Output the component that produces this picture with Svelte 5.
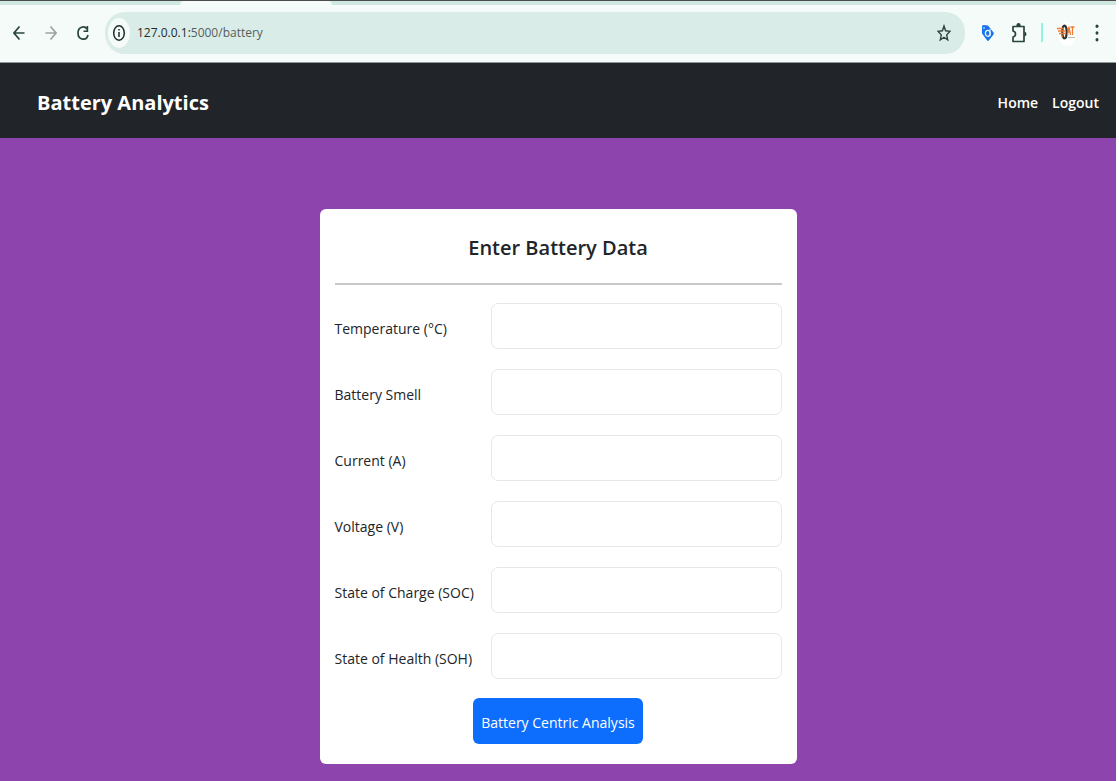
<script>
  const fields = [
    { id: 'temperature', label: 'Temperature (°C)' },
    { id: 'smell', label: 'Battery Smell' },
    { id: 'current', label: 'Current (A)' },
    { id: 'voltage', label: 'Voltage (V)' },
    { id: 'soc', label: 'State of Charge (SOC)' },
    { id: 'soh', label: 'State of Health (SOH)' }
  ];
</script>

<div class="window">
  <div class="tabs"><span class="tab"></span></div>
  <div class="toolbar">
    <button class="tool" aria-label="Back">
      <svg width="12" height="16" viewBox="0 0 12 16"><path d="M11.5 8H1.5M6.5 1.5L1 8l5.500 6.500" fill="none" stroke="#29443f" stroke-width="1.700" /></svg>
    </button>
    <button class="tool" aria-label="Forward">
      <svg width="12" height="16" viewBox="0 0 12 16"><path d="M.5 8h10M5.500 1.500L11 8l-5.500 6.500" fill="none" stroke="#9ba5a3" stroke-width="1.700" /></svg>
    </button>
    <button class="tool" aria-label="Reload">
      <svg width="12" height="16" viewBox="0 0 12 16"><path d="M10 4C7.500 .5 1 1.500 1 8c0 7 8.500 8.500 10 2" fill="none" stroke="#29443f" stroke-width="1.700" /><path d="M11.200 1v6H6.500V5.500h3V1z" fill="#29443f" /></svg>
    </button>
    <div class="address">
      <button class="info" aria-label="Site information">
        <svg width="14" height="18" viewBox="0 0 14 18"><ellipse cx="7" cy="9" rx="5.300" ry="7.200" fill="none" stroke="#202b29" stroke-width="1.500" /><path d="M7 8v5M7 5v1.600" stroke="#202b29" stroke-width="1.500" /></svg>
      </button>
      <span class="url">127.0.0.1:<span class="path">5000/battery</span></span>
      <button class="star" aria-label="Bookmark">
        <svg width="14" height="18" viewBox="0 0 14 18"><path d="M7 2l1.600 4.800 4.400.5-3.300 3.600 1 5.100L7 13.300 3.300 16l1-5.100L1 7.300l4.400-.5z" fill="none" stroke="#34413e" stroke-width="1.400" /></svg>
      </button>
    </div>
    <button class="tool" aria-label="Price tag extension">
      <svg width="14" height="18" viewBox="0 0 14 18"><path d="M1 2.500Q1 1 2.500 1L7 1.500 12.500 8.500q.8 1 0 2L8 16.300q-1 1.200-2 0L1 9.500z" fill="#1a73e8" /><ellipse cx="6.800" cy="9.300" rx="2.400" ry="3" fill="none" stroke="#e9f6ff" stroke-width="1.300" /><circle cx="3" cy="4" r=".8" fill="#fff" /><path d="M9 5v7" stroke="#e9f6ff" /></svg>
    </button>
    <button class="tool" aria-label="Extensions">
      <svg width="16" height="22" viewBox="0 0 16 22"><path d="M2 4.500h11v15H2v-4.500q2.500-.5 2.500-3T2 9z" fill="none" stroke="#29443f" stroke-width="1.700" stroke-linejoin="round" /><path d="M5.300 4q0-3 2.200-3t2.200 3zM13.500 9.500q2 .5 2 2.500t-2 2.500z" fill="#29443f" /></svg>
    </button>
    <span class="divider"></span>
    <button class="tool profile" aria-label="Profile">
      <svg width="20" height="26" viewBox="0 0 20 26"><ellipse cx="10" cy="14" rx="9" ry="12" fill="#fff" /><ellipse cx="7.500" cy="12" rx="2.200" ry="6.500" fill="none" stroke="#343434" stroke-width="2.200" /><path d="M0 8.500h7M1 11h7M2 13.500h6M4 16h2" stroke="#ef7d32" stroke-width="1.300" /><path d="M10.500 15l1.500-8.500 1.500 8.500M11 12h2M13.500 7h4M15.500 7v8" fill="none" stroke="#ef7d32" stroke-width="1.300" /><path d="M11 17.500h7" stroke="#aaa" stroke-width=".8" /></svg>
    </button>
    <button class="tool menu" aria-label="Menu">
      <svg width="4" height="18" viewBox="0 0 4 18" fill="#29443f"><ellipse cx="2" cy="2.200" rx="1.500" ry="1.700" /><ellipse cx="2" cy="9" rx="1.500" ry="1.700" /><ellipse cx="2" cy="15.800" rx="1.500" ry="1.700" /></svg>
    </button>
  </div>

  <header>
    <a class="brand" href="#home">Battery Analytics</a>
    <nav>
      <a href="#home">Home</a>
      <a href="#logout">Logout</a>
    </nav>
  </header>

  <main>
    <form onsubmit={(e) => e.preventDefault()}>
      <h1>Enter Battery Data</h1>
      <div class="fields">
        {#each fields as field (field.id)}
          <label for={field.id}>{field.label}</label>
          <input id={field.id} type="text" />
        {/each}
      </div>
      <button class="submit" type="submit">Battery Centric Analysis</button>
    </form>
  </main>
</div>

<style>
  :global(body) {
    margin: 0;
    background: #fff;
  }
  .window {
    display: flex;
    flex-direction: column;
    box-sizing: border-box;
    min-height: 100vh;
    padding-right: 3px;
    font-family: "Open Sans", "Noto Sans", sans-serif;
    color: #212529;
  }
  button {
    border: 0;
    padding: 0;
    background: none;
    font: inherit;
  }
  svg {
    display: block;
  }
  .tabs {
    height: 4px;
    padding-left: 180px;
    border-top: 1px solid #4c4c4c;
    background: #cfe7e1;
  }
  .tab {
    display: block;
    width: 152px;
    height: 4px;
    border-radius: 4px 4px 0 0;
    background: #f4fbf9;
  }
  .toolbar {
    display: flex;
    align-items: center;
    box-sizing: border-box;
    height: 58px;
    padding: 0 17px 2px 13px;
    gap: 16px;
    border-bottom: 1px solid #8d9997;
    background: #f4fbf9;
  }
  .toolbar > .tool:nth-child(-n + 2) {
    margin-right: 4px;
  }
  .address {
    display: flex;
    flex: 1;
    align-items: center;
    box-sizing: border-box;
    height: 42px;
    padding: 0 14px 0 3px;
    border-radius: 20px;
    background: #daece7;
  }
  .info {
    display: grid;
    place-items: center;
    width: 22px;
    height: 30px;
    border-radius: 50%;
    background: #f4fbf9;
  }
  .url {
    flex: 1;
    margin-left: 7px;
    font-size: 12px;
    color: #202b29;
  }
  .path {
    color: #53605d;
  }
  .divider {
    width: 2px;
    height: 19px;
    margin: 0 -2px;
    background: #91f5e5;
  }
  .menu {
    margin-left: 2px;
  }
  header {
    display: flex;
    align-items: center;
    justify-content: space-between;
    box-sizing: border-box;
    height: 75px;
    padding: 4px 17px 0 37px;
    background: #212529;
  }
  header a {
    color: #fff;
    text-decoration: none;
  }
  .brand {
    font-size: 20px;
    font-weight: 700;
  }
  nav {
    display: flex;
    gap: 14px;
    font-size: 14px;
    font-weight: 600;
  }
  main {
    display: flex;
    flex: 1;
    align-items: flex-start;
    justify-content: center;
    padding: 71px 16px 17px;
    background: #8e44ad;
  }
  form {
    display: flex;
    flex-direction: column;
    align-items: center;
    box-sizing: border-box;
    width: 100%;
    max-width: 477px;
    padding: 20px 15px;
    border-radius: 6px;
    background: #fff;
  }
  h1 {
    width: 100%;
    margin: 0 0 18px;
    padding-bottom: 16px;
    border-bottom: 2px solid #c8c9ca;
    font-size: 20px;
    font-weight: 600;
    line-height: 38px;
    text-align: center;
  }
  .fields {
    display: grid;
    grid-template-columns: 156px 1fr;
    align-items: center;
    width: 100%;
    row-gap: 20px;
    font-size: 14px;
  }
  label {
    padding-top: 4px;
    white-space: nowrap;
  }
  input {
    box-sizing: border-box;
    width: 100%;
    height: 46px;
    padding: 8px 12px;
    border: 1px solid #e6e7e8;
    border-radius: 7px;
    background: #fff;
    font: inherit;
  }
  .submit {
    height: 46px;
    margin-top: 19px;
    padding: 2px 8px 0;
    border-radius: 6px;
    background: #0d6efd;
    color: #fff;
    font-size: 14px;
  }
</style>
